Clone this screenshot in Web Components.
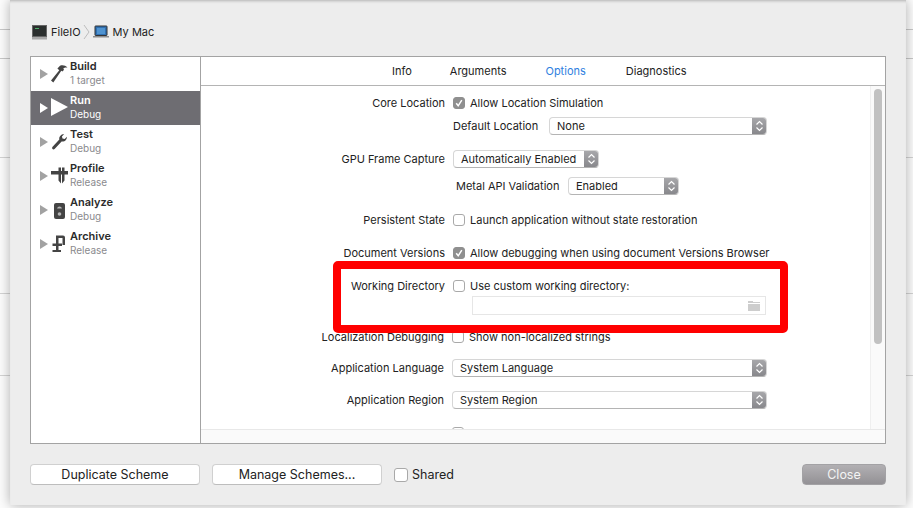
<!DOCTYPE html>
<html>
<head>
<meta charset="utf-8">
<title>Scheme editor</title>
<style>
  html, body { margin: 0; height: 100%; }
  body { background: #fdfdfd; overflow: hidden; font: 11px/16px Inter, "Liberation Sans", Arial, sans-serif; color: #222; }
</style>
</head>
<body>
<scheme-sheet>
  <scheme-path slot="path"></scheme-path>
  <scheme-list slot="list">
    <scheme-action name="Build" sub="1 target" icon="hammer"></scheme-action>
    <scheme-action name="Run" sub="Debug" icon="play" selected></scheme-action>
    <scheme-action name="Test" sub="Debug" icon="wrench"></scheme-action>
    <scheme-action name="Profile" sub="Release" icon="caliper"></scheme-action>
    <scheme-action name="Analyze" sub="Debug" icon="analyze"></scheme-action>
    <scheme-action name="Archive" sub="Release" icon="clamp"></scheme-action>
  </scheme-list>
  <option-tabs slot="tabs"></option-tabs>
  <form-row slot="form" label="Core Location" top="9">
    <mac-check checked>Allow Location Simulation</mac-check>
  </form-row>
  <form-row slot="form" top="6" plain>
    <span style="width:96px">Default Location</span>
    <mac-select width="218">None</mac-select>
  </form-row>
  <form-row slot="form" label="GPU Frame Capture" top="15">
    <mac-select width="146">Automatically Enabled</mac-select>
  </form-row>
  <form-row slot="form" top="9" plain>
    <span style="width:115px;padding-left:3px;box-sizing:border-box">Metal API Validation</span>
    <mac-select width="111">Enabled</mac-select>
  </form-row>
  <form-row slot="form" label="Persistent State" top="17">
    <mac-check>Launch application without state restoration</mac-check>
  </form-row>
  <form-row slot="form" label="Document Versions" top="17">
    <mac-check checked>Allow debugging when using document Versions Browser</mac-check>
  </form-row>
  <form-row slot="form" label="Working Directory" top="17">
    <mac-check>Use custom working directory:</mac-check>
  </form-row>
  <form-row slot="form" top="2" plain><path-field></path-field></form-row>
  <form-row slot="form" label="Localization Debugging" top="14" shift>
    <mac-check>Show non-localized strings</mac-check>
  </form-row>
  <form-row slot="form" label="Application Language" top="14" shift>
    <mac-select width="315">System Language</mac-select>
  </form-row>
  <form-row slot="form" label="Application Region" top="14" shift>
    <mac-select width="315">System Region</mac-select>
  </form-row>
  <form-row slot="form" top="17" shift><mac-check></mac-check></form-row>
  <mac-button slot="footer" width="170">Duplicate Scheme</mac-button>
  <mac-button slot="footer" width="170" style="margin-left:12px">Manage Schemes...</mac-button>
  <mac-check slot="footer" large style="margin-left:12px">Shared</mac-check>
  <mac-button slot="close" width="84" disabled>Close</mac-button>
</scheme-sheet>

<script>
// small helper, every element below just sets its shadow html once
function shadow(el, html) {
  el.attachShadow({ mode: 'open' });
  el.shadowRoot.innerHTML = html;
}

const ICONS = {
  hammer: '<path d="M1 17.500 9.300 7.200 7.400 5.500 10 2.800c2.700-1 5.300-.3 7.500 1.700-2-.2-3.500.2-4.300 1.200l.9 1-1.700 1.800-1.100-.8L3.300 19.500z"/>',
  play: '<path d="M1 1 18 10 1 19z"/>',
  wrench: '<g transform="translate(1 1.500) scale(.85)"><path d="M1.600 17 9.800 8.200C9.200 5.200 11.400 2 15.500 1.700l-2.600 3 .6 2.500 2.600.5 2.600-2.800c.2 3.800-3 6.400-6.200 5.700L4.200 19.500c-1.600 1.300-3.700-.7-2.600-2.500z"/></g>',
  caliper: '<path d="M1 6h7.500V2.500h2.500V6h1V2.500h2.500V6H18v3.500h-3.500v6l-2.500 3V9.500h-1v9l-2.500-3v-6H1z"/>',
  analyze: '<rect x="4" y="4" width="11" height="16" rx="2"/><path d="M7 9.500a2.600 2.600 0 0 1 5 0z" fill="#b5b5b5"/><circle cx="9.500" cy="15" r="1.800" fill="#b5b5b5"/>',
  clamp: '<path d="M6 2.500h7a2 2 0 0 1 2 2V12h-2.500V5H8.500v5.500H12V13H8.500v4H11v2H2.500v-2H6v-4H2.500v-2.500H6z"/>'
};

class SchemeSheet extends HTMLElement {
  constructor() {
    super();
    shadow(this, `
      <style>
        :host { display: block; height: 508px; box-sizing: border-box; padding: 0 7px 3px 10px; position: relative; }
        .lines { position: absolute; inset: 0; background:
          linear-gradient(#c9c9c9, #c9c9c9) 0 29px / 100% 1px no-repeat,
          linear-gradient(#c9c9c9, #c9c9c9) 0 58px / 100% 1px no-repeat,
          linear-gradient(#d4d4d4, #d4d4d4) 0 157px / 100% 1px no-repeat,
          linear-gradient(#d4d4d4, #d4d4d4) 0 293px / 100% 1px no-repeat,
          linear-gradient(#d4d4d4, #d4d4d4) 0 375px / 100% 1px no-repeat; }
        .sheet { position: relative; height: 100%; box-sizing: border-box; background: #ededed; padding: 0 20px;
          display: flex; flex-direction: column; box-shadow: 0 0 12px rgba(0,0,0,.32), inset 0 3px 3px -2px rgba(0,0,0,.25); }
        .path { height: 56px; display: flex; align-items: center; padding-top: 8px; box-sizing: border-box; }
        .panel { height: 388px; box-sizing: border-box; display: flex; background: #fff; border: 1px solid #a3a3a3; }
        .side { width: 169px; border-right: 1px solid #a3a3a3; }
        .main { flex: 1; display: flex; flex-direction: column; min-width: 0; }
        .content { height: 344px; box-sizing: border-box; overflow: hidden; position: relative; border-bottom: 1px solid #e8e8e8; }
        .strip { flex: 1; background: #fafafa; }
        .bar { position: absolute; top: 3px; right: 3px; width: 8px; height: 255px; border-radius: 4px; background: #c1c1c1; }
        .track { position: absolute; top: 0; bottom: 0; right: 0; width: 15px; border-left: 1px solid #efefef; background: #fafafa; box-sizing: border-box; }
        .foot { flex: 1; display: flex; align-items: center; }
        .close { margin-left: auto; }
        .mark { position: absolute; left: 323px; top: 261px; width: 455px; height: 72px; box-sizing: border-box;
          border: 8px solid #ff0000; border-radius: 5px; }
      </style>
      <div class="lines"></div>
      <div class="sheet">
        <div class="path"><slot name="path"></slot></div>
        <div class="panel">
          <div class="side"><slot name="list"></slot></div>
          <div class="main">
            <slot name="tabs"></slot>
            <div class="content">
              <slot name="form"></slot>
              <div class="track"></div>
              <div class="bar"></div>
            </div>
            <div class="strip"></div>
          </div>
        </div>
        <div class="foot">
          <slot name="footer"></slot>
          <div class="close"><slot name="close"></slot></div>
        </div>
        <div class="mark"></div>
      </div>`);
  }
}

class SchemePath extends HTMLElement {
  constructor() {
    super();
    shadow(this, `
      <style>
        :host { display: flex; align-items: center; font-size: 11px; color: #222; margin-left: 2px; }
        svg { display: block; }
      </style>
      <svg width="15" height="15" viewBox="0 0 15 15">
        <rect x=".5" y=".5" width="14" height="11" fill="#2b2f2e" stroke="#666"/>
        <rect x="0" y="12" width="15" height="2.500" fill="#a8a8a8"/>
        <path d="M3 3.500h4" stroke="#4fae6a"/>
      </svg>
      <span style="margin-left:4px">FileIO</span>
      <svg width="8" height="16" viewBox="0 0 8 16" style="margin:0 2px 0 2px">
        <path d="M1 1l5 7-5 7" fill="none" stroke="#bdbdbd"/>
      </svg>
      <svg width="16" height="14" viewBox="0 0 16 14">
        <rect x="2" y="1" width="12" height="9.500" rx=".5" fill="#2f6fb0" stroke="#333"/>
        <path d="M4 3h8v6H4z" fill="#4f93d0"/>
        <path d="M0 11h16v1.500H0z" fill="#8c8c8c"/>
      </svg>
      <span style="margin-left:4px">My Mac</span>`);
  }
}

class SchemeList extends HTMLElement {
  constructor() {
    super();
    shadow(this, `<style>:host { display: block; }</style><slot></slot>`);
  }
}

class SchemeAction extends HTMLElement {
  constructor() {
    super();
    const sel = this.hasAttribute('selected');
    const icon = ICONS[this.getAttribute('icon')] || '';
    shadow(this, `
      <style>
        :host { display: flex; height: 34px; align-items: center; box-sizing: border-box; padding-left: 9px;
          background: ${sel ? '#6e6d72' : 'transparent'}; }
        svg { display: block; flex: none; }
        .tri { fill: ${sel ? '#fff' : '#a2a2a2'}; margin-right: 2px; }
        .ico { fill: ${sel ? '#fff' : '#444'}; margin-right: 0; margin-top: -3px; }
        .t { line-height: 14px; margin-top: -3px; }
        .n { font-size: 11px; font-weight: 600; color: ${sel ? '#fff' : '#2b2b2b'}; }
        .s { font-size: 10px; color: ${sel ? '#fff' : '#8a8a8e'}; }
      </style>
      <svg class="tri" width="8" height="10" viewBox="0 0 8 10"><path d="M0 0l8 5-8 5z"/></svg>
      <svg class="ico" width="20" height="20" viewBox="0 0 20 20">${icon}</svg>
      <div class="t"><div class="n">${this.getAttribute('name')}</div><div class="s">${this.getAttribute('sub')}</div></div>`);
  }
}

class OptionTabs extends HTMLElement {
  constructor() {
    super();
    shadow(this, `
      <style>
        :host { display: flex; height: 29px; box-sizing: border-box; border-bottom: 1px solid #b4b4b4; align-items: center; font-size: 11px; }
        span { color: #222; }
        .on { color: #2f7fe0; }
      </style>
      <span style="margin-left:191px">Info</span>
      <span style="margin-left:38px">Arguments</span>
      <span class="on" style="margin-left:39px">Options</span>
      <span style="margin-left:40px">Diagnostics</span>`);
  }
}

class FormRow extends HTMLElement {
  constructor() {
    super();
    const label = this.getAttribute('label') || '';
    const plain = this.hasAttribute('plain');
    const shift = this.hasAttribute('shift');
    shadow(this, `
      <style>
        :host { display: flex; align-items: center; min-height: 14px; margin-top: ${this.getAttribute('top') || 0}px; font-size: 11px; }
        .l { width: ${shift ? 243 : 244}px; text-align: right; white-space: nowrap; flex: none; direction: rtl; }
        .c { margin-left: 8px; display: flex; align-items: center; white-space: nowrap; }
      </style>
      <div class="l">${plain ? '' : label}</div>
      <div class="c"><slot></slot></div>`);
  }
}

class MacCheck extends HTMLElement {
  constructor() {
    super();
    const on = this.hasAttribute('checked');
    const big = this.hasAttribute('large');
    shadow(this, `
      <style>
        :host { display: inline-flex; align-items: center; font-size: ${big ? 12.5 : 11}px; color: #222; }
        .b { width: ${big ? 14 : 12}px; height: ${big ? 14 : 12}px; box-sizing: border-box; border-radius: 3px; margin-right: ${big ? 4 : 5}px; flex: none;
          border: 1px solid ${on ? '#8f8f8f' : '#a9a9a9'}; background: ${on ? '#8f8f8f' : '#fff'}; display: block; }
        svg { display: block; }
      </style>
      <span class="b">${on ? '<svg width="10" height="10" viewBox="0 0 10 10"><path d="M2.200 5.200 4.200 7.800 7.800 2.200" fill="none" stroke="#fff" stroke-width="1.500"/></svg>' : ''}</span>
      <slot></slot>`);
  }
}

class MacSelect extends HTMLElement {
  constructor() {
    super();
    shadow(this, `
      <style>
        :host { display: flex; align-items: center; box-sizing: border-box; height: 18px; width: ${this.getAttribute('width')}px;
          background: #fff; border: 1px solid #d6d6d6; border-bottom-color: #b4b4b4; border-radius: 4px; padding-left: 7px; font-size: 11px; position: relative; overflow: hidden; }
        .t { flex: 1; }
        .a { width: 15px; align-self: stretch; margin: -1px -1px -1px 0; background: linear-gradient(#a9a9ac, #86868a); display: flex; align-items: center; justify-content: center; }
        svg { display: block; }
      </style>
      <span class="t"><slot></slot></span>
      <span class="a"><svg width="9" height="12" viewBox="0 0 9 12"><path d="M1.500 4.500 4.500 1.500 7.500 4.500M1.500 7.500 4.500 10.500 7.500 7.500" fill="none" stroke="#fff" stroke-width="1.200"/></svg></span>`);
  }
}

class PathField extends HTMLElement {
  constructor() {
    super();
    shadow(this, `
      <style>
        :host { display: flex; align-items: center; justify-content: flex-end; box-sizing: border-box; width: 294px; height: 19px; margin-left: 19px;
          border: 1px solid #e6e6e6; padding-right: 5px; background: #fff; }
        svg { display: block; }
      </style>
      <svg width="12" height="10" viewBox="0 0 12 10"><path d="M0 0h5v1h7v1H0zM0 3h12v7H0z" fill="#cdcdcd"/></svg>`);
  }
}

class MacButton extends HTMLElement {
  constructor() {
    super();
    const off = this.hasAttribute('disabled');
    shadow(this, `
      <style>
        :host { display: flex; align-items: center; justify-content: center; box-sizing: border-box; height: 21px; width: ${this.getAttribute('width')}px;
          border-radius: 4px; font-size: 12.500px;
          ${off ? 'background: linear-gradient(#b2b0b3, #939195); color: #f4f4f4; border: 1px solid #a3a2a5;' : 'background: #fff; color: #222; border: 1px solid #d0d0d0; border-bottom-color: #bdbdbd;'} }
      </style>
      <slot></slot>`);
  }
}

customElements.define('scheme-sheet', SchemeSheet);
customElements.define('scheme-path', SchemePath);
customElements.define('scheme-list', SchemeList);
customElements.define('scheme-action', SchemeAction);
customElements.define('option-tabs', OptionTabs);
customElements.define('form-row', FormRow);
customElements.define('mac-check', MacCheck);
customElements.define('mac-select', MacSelect);
customElements.define('path-field', PathField);
customElements.define('mac-button', MacButton);
</script>
</body>
</html>
